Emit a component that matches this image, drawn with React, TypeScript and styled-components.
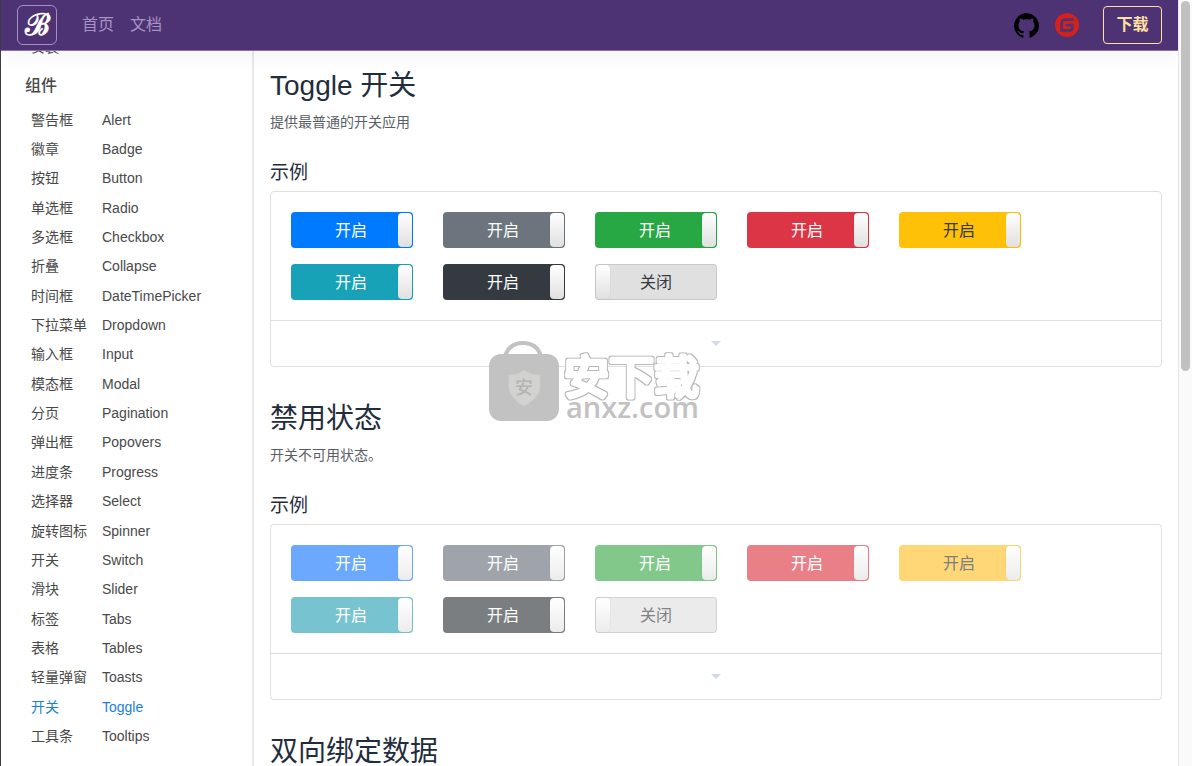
import React from "react";
import styled, { createGlobalStyle, css } from "styled-components";
import { SiGithub, SiGitee } from "react-icons/si";

const GlobalStyle = createGlobalStyle`
  *, *::before, *::after { box-sizing: border-box; }
  body {
    margin: 0;
    background: #fff;
    color: #212529;
    font-family: "Liberation Sans", "Noto Sans CJK SC", sans-serif;
    font-size: 14px;
    line-height: 20px;
  }
`;

const Page = styled.div`
  height: 100vh;
  overflow: hidden;
  display: grid;
  grid-template-columns: minmax(0, 1fr) 14px;
  border-left: 1px solid #3d3a42;
`;

const Content = styled.div`
  position: relative;
  height: 100vh;
  overflow: hidden;
`;

const Header = styled.header`
  position: absolute;
  z-index: 2;
  top: 0;
  left: 0;
  right: 0;
  height: 51px;
  padding: 0 16px;
  display: flex;
  align-items: center;
  background: #4d3274;
  border-bottom: 1px solid #8a6fae;
  box-shadow: 0 8px 16px rgba(0, 0, 0, 0.04);
`;

const Brand = styled.a`
  width: 40px;
  height: 40px;
  margin-right: 17px;
  display: flex;
  align-items: center;
  justify-content: center;
  border: 1px solid #a58fc4;
  border-radius: 6px;
  color: #fff;
  font: bold 30px/34px "Liberation Serif", serif;
  text-decoration: none;
`;

const Nav = styled.nav`
  flex: 1;
  display: flex;
`;

const NavLink = styled.a`
  padding: 8px;
  color: #a793c4;
  font-size: 16px;
  line-height: 24px;
  text-decoration: none;
`;

const IconLink = styled.a<{ $color: string }>`
  display: flex;
  margin-right: 16px;
  color: ${(p) => p.$color};
`;

const Download = styled.button`
  width: 59px;
  height: 38px;
  margin-left: 8px;
  padding: 0;
  border: 1px solid #ffe0a0;
  border-radius: 4px;
  background: transparent;
  color: #ffe0a0;
  font: bold 16px/24px "Liberation Sans", "Noto Sans CJK SC", sans-serif;
`;

const Columns = styled.div`
  height: 100%;
  display: grid;
  grid-template-columns: 253px minmax(0, 1fr);
`;

const Sidebar = styled.aside`
  padding: 32px 24px 0;
  overflow: hidden;
  border-right: 2px solid #e8e8ea;
  color: #494949;
`;

const MenuGroup = styled.h2`
  margin: 10px 0 4px;
  font-size: 16px;
  line-height: 30px;
  font-weight: 500;
`;

const Menu = styled.ul`
  margin: 0;
  padding: 0;
  list-style: none;
  display: grid;
  grid-auto-rows: 1fr;
  min-height: 646px;
`;

const MenuLink = styled.a<{ $active?: boolean }>`
  min-height: 29px;
  padding-left: 6px;
  display: grid;
  grid-template-columns: 71px 1fr;
  align-items: center;
  color: ${(p) => (p.$active ? "#1a7fd8" : "inherit")};
  text-decoration: none;
  white-space: nowrap;
`;

const Main = styled.main`
  padding: 68px 16px 0;
  overflow: hidden;
`;

const Section = styled.section`
  margin-bottom: 34px;
`;

const Title = styled.h1`
  margin: 0;
  color: #1f2d3d;
  font-size: 28px;
  line-height: 36px;
  font-weight: 400;
`;

const Lead = styled.p`
  margin: 8px 0 26px;
  color: #5a5e66;
`;

const Subtitle = styled.h2`
  margin: 0 0 3px;
  color: #1f2d3d;
  font-size: 19px;
  line-height: 30px;
  font-weight: 400;
`;

const Card = styled.div`
  border: 1px solid #dfdfdf;
  border-radius: 4px;
`;

const Toggles = styled.div`
  padding: 20px;
  display: flex;
  flex-wrap: wrap;
  gap: 16px 30px;
`;

const Expand = styled.button`
  width: 100%;
  height: 46px;
  padding: 0;
  display: flex;
  align-items: center;
  justify-content: center;
  border: 0;
  border-top: 1px solid #dfdfdf;
  background: transparent;
`;

const Caret = styled.span`
  border: 5px solid transparent;
  border-top-color: #d3dce6;
  border-bottom-width: 0;
`;

const ToggleLabel = styled.label<{ $bg: string; $fg: string; $off?: boolean }>`
  position: relative;
  width: 122px;
  height: 36px;
  padding: 1px;
  display: flex;
  flex-direction: ${(p) => (p.$off ? "row-reverse" : "row")};
  border-radius: 4px;
  background: ${(p) => p.$bg};
  color: ${(p) => p.$fg};
  font-size: 16px;
  line-height: 36px;
  ${(p) =>
    p.$off &&
    css`
      box-shadow: inset 0 0 0 1px rgba(0, 0, 0, 0.1);
    `}
`;

const ToggleInput = styled.input`
  position: absolute;
  inset: 0;
  width: 100%;
  height: 100%;
  margin: 0;
  opacity: 0;
`;

const ToggleText = styled.span<{ $off?: boolean }>`
  flex: 1;
  height: 34px;
  padding: ${(p) => (p.$off ? "0 14px 0 0" : "0 0 0 12px")};
  text-align: center;
`;

const Handle = styled.span<{ $faded?: boolean }>`
  width: 14px;
  height: 34px;
  border-radius: 4px;
  background: ${(p) =>
    p.$faded
      ? "linear-gradient(#fff, #ececec)"
      : "linear-gradient(#fff, #e0e0e0)"};
  box-shadow: 0 0 1px rgba(0, 0, 0, 0.2);
`;

const ScrollTrack = styled.div`
  padding: 1px 1px 0 2px;
  border-left: 1px solid #e6e6e6;
  background: #fafafa;
`;

const ScrollThumb = styled.div`
  width: 9px;
  height: 370px;
  border-radius: 5px;
  background: #c1c1c1;
`;

const Watermark = styled.svg`
  position: absolute;
  z-index: 3;
  left: 485px;
  top: 340px;
  pointer-events: none;
`;

const menu: [string, string][] = [
  ["警告框", "Alert"],
  ["徽章", "Badge"],
  ["按钮", "Button"],
  ["单选框", "Radio"],
  ["多选框", "Checkbox"],
  ["折叠", "Collapse"],
  ["时间框", "DateTimePicker"],
  ["下拉菜单", "Dropdown"],
  ["输入框", "Input"],
  ["模态框", "Modal"],
  ["分页", "Pagination"],
  ["弹出框", "Popovers"],
  ["进度条", "Progress"],
  ["选择器", "Select"],
  ["旋转图标", "Spinner"],
  ["开关", "Switch"],
  ["滑块", "Slider"],
  ["标签", "Tabs"],
  ["表格", "Tables"],
  ["轻量弹窗", "Toasts"],
  ["开关", "Toggle"],
  ["工具条", "Tooltips"],
];

type ToggleItem = { bg: string; fg: string; off?: boolean };

const enabledToggles: ToggleItem[] = [
  { bg: "#007bff", fg: "#fff" },
  { bg: "#6c757d", fg: "#fff" },
  { bg: "#28a745", fg: "#fff" },
  { bg: "#dc3545", fg: "#fff" },
  { bg: "#ffc107", fg: "#343a40" },
  { bg: "#17a2b8", fg: "#fff" },
  { bg: "#343a40", fg: "#fff" },
  { bg: "#e0e0e0", fg: "#343a40", off: true },
];

const disabledToggles: ToggleItem[] = [
  { bg: "#6ba9ff", fg: "#fff" },
  { bg: "#9fa4aa", fg: "#fff" },
  { bg: "#82c88b", fg: "#fff" },
  { bg: "#ea8087", fg: "#fff" },
  { bg: "#ffd777", fg: "#7b7e80" },
  { bg: "#78c3d0", fg: "#fff" },
  { bg: "#7b7e80", fg: "#fff" },
  { bg: "#ebebeb", fg: "#808284", off: true },
];

function Demo({ items, disabled }: { items: ToggleItem[]; disabled?: boolean }) {
  return (
    <Card>
      <Toggles>
        {items.map((t) => (
          <ToggleLabel key={t.bg} $bg={t.bg} $fg={t.fg} $off={t.off}>
            <ToggleInput type="checkbox" defaultChecked={!t.off} disabled={disabled} />
            <ToggleText $off={t.off}>{t.off ? "关闭" : "开启"}</ToggleText>
            <Handle $faded={disabled} />
          </ToggleLabel>
        ))}
      </Toggles>
      <Expand type="button" aria-label="展开">
        <Caret />
      </Expand>
    </Card>
  );
}

export default function App() {
  return (
    <Page>
      <GlobalStyle />
      <Content>
        <Header>
          <Brand href="#">ℬ</Brand>
          <Nav>
            <NavLink href="#">首页</NavLink>
            <NavLink href="#">文档</NavLink>
          </Nav>
          <IconLink href="#" aria-label="GitHub" $color="#000">
            <SiGithub size={25} />
          </IconLink>
          <IconLink href="#" aria-label="Gitee" $color="#d4211b">
            <SiGitee size={24} />
          </IconLink>
          <Download type="button">下载</Download>
        </Header>
        <Columns>
          <Sidebar>
            <MenuLink href="#">安装</MenuLink>
            <MenuGroup>组件</MenuGroup>
            <Menu>
              {menu.map(([zh, en]) => (
                <li key={en}>
                  <MenuLink href="#" $active={en === "Toggle"}>
                    <span>{zh}</span>
                    <span>{en}</span>
                  </MenuLink>
                </li>
              ))}
            </Menu>
          </Sidebar>
          <Main>
            <Section>
              <Title>Toggle 开关</Title>
              <Lead>提供最普通的开关应用</Lead>
              <Subtitle>示例</Subtitle>
              <Demo items={enabledToggles} />
            </Section>
            <Section>
              <Title>禁用状态</Title>
              <Lead>开关不可用状态。</Lead>
              <Subtitle>示例</Subtitle>
              <Demo items={disabledToggles} disabled />
            </Section>
            <Section>
              <Title>双向绑定数据</Title>
            </Section>
          </Main>
        </Columns>
        <Watermark width="220" height="90" viewBox="0 0 220 90">
          <defs>
            <filter id="outline" x="-10%" y="-20%" width="120%" height="140%">
              <feMorphology in="SourceAlpha" operator="dilate" radius="1" result="fat" />
              <feFlood floodColor="#b8b8b8" />
              <feComposite in2="fat" operator="in" result="edge" />
              <feMerge>
                <feMergeNode in="edge" />
                <feMergeNode in="SourceGraphic" />
              </feMerge>
            </filter>
          </defs>
          <path d="M19 16C22 7 29 3 37 3s15 4 18 13" fill="none" stroke="#c2c2c2" strokeWidth="4" />
          <rect x="3" y="14" width="70" height="67" rx="12" fill="#c2c2c2" />
          <path d="M38 30c5 4 10 5 16 5v11c0 9-7 15-16 20-9-5-15-11-15-20V35c6 0 11-1 15-5z" fill="#d2d2d0" stroke="#cdcdcd" />
          <text x="29" y="54" fontSize="18" fontWeight="500" fill="#b4b4b4" fontFamily="Noto Sans CJK SC, sans-serif">安</text>
          <text
            x="78"
            y="54"
            fontSize="45"
            fontWeight="400"
            fill="#fff"
            stroke="#fff"
            strokeWidth="4"
            strokeLinejoin="round"
            filter="url(#outline)"
            fontFamily="Noto Sans CJK SC, sans-serif"
          >
            安下载
          </text>
          <text x="80" y="78" fontSize="29" fontWeight="600" fill="#c2c2c2" fontFamily="Open Sans, sans-serif">anxz.com</text>
        </Watermark>
      </Content>
      <ScrollTrack>
        <ScrollThumb />
      </ScrollTrack>
    </Page>
  );
}
